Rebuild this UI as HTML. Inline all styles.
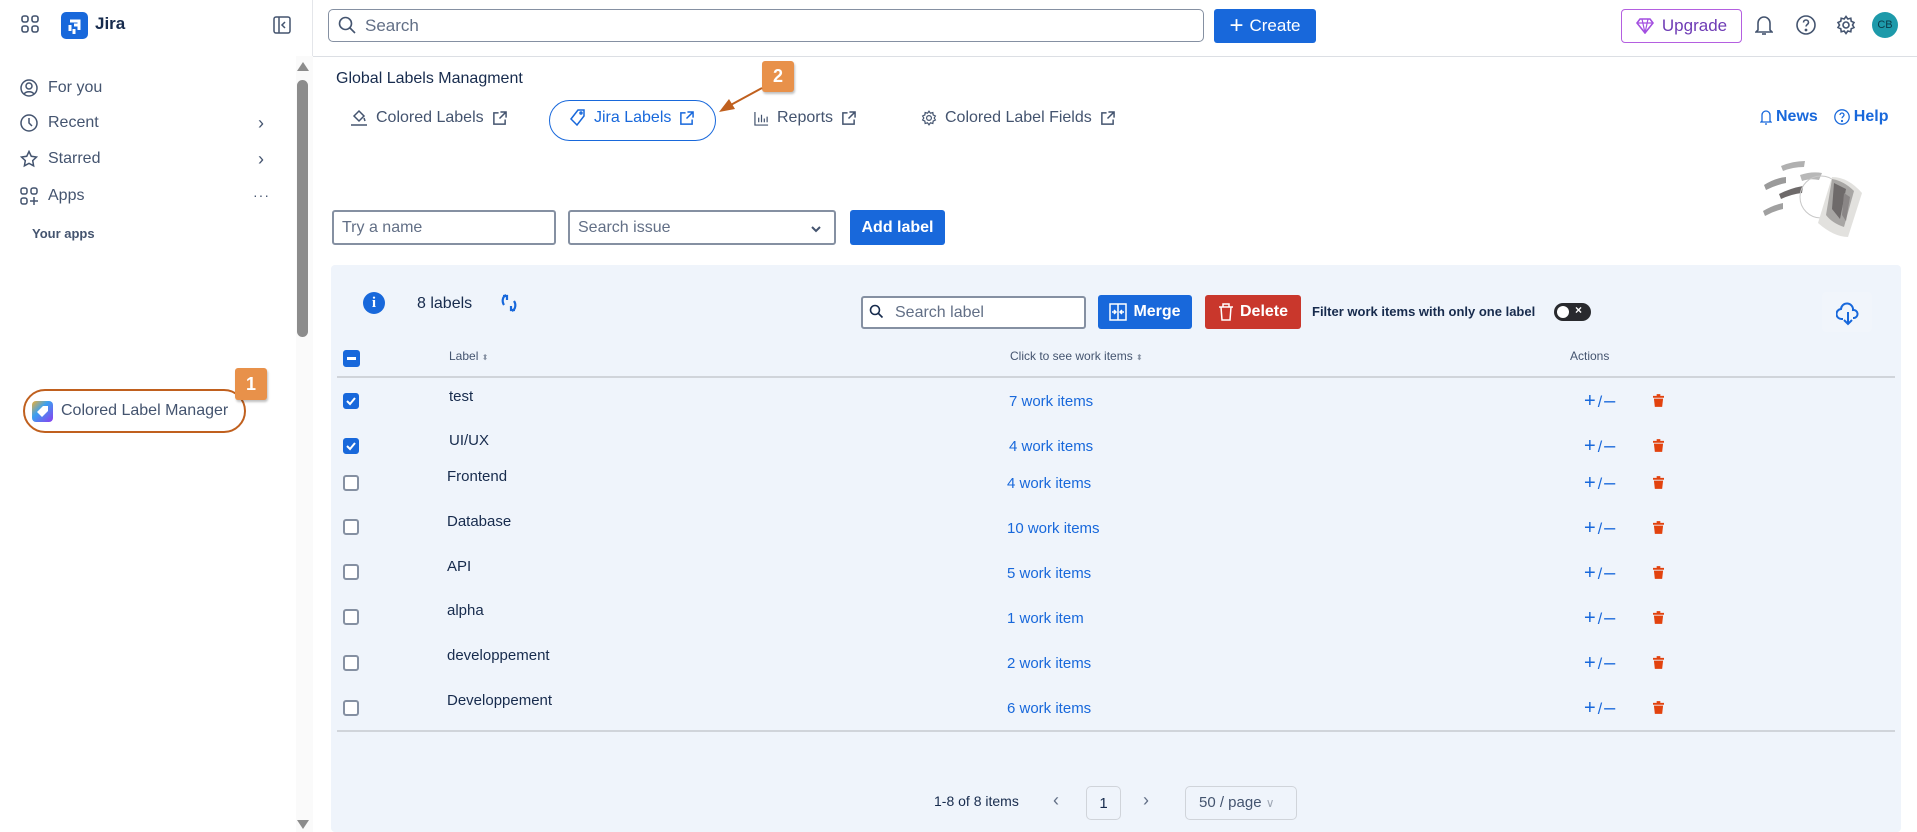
<!DOCTYPE html>
<html><head><meta charset="utf-8">
<style>
*{box-sizing:border-box;margin:0;padding:0}
body{width:1917px;height:832px;overflow:hidden;background:#fff;font-family:"Liberation Sans",sans-serif;color:#172b4d;position:relative}
.a{position:absolute}
.side{left:0;top:0;width:313px;height:832px;border-right:1px solid #e4e6ea}
.nav{left:20px;font-size:16px;color:#44546f;display:flex;align-items:center}
.nav svg{margin-right:10px}
.top{left:313px;top:56px;width:1604px;height:1px;background:#dcdfe4}
.btn{border-radius:3px;color:#fff;font-weight:bold;font-size:16px;display:flex;align-items:center;justify-content:center}
.inp{border:2px solid #8590a2;border-radius:3px;background:#fff;font-size:16px;color:#626f86;display:flex;align-items:center;padding-left:8px}
.tab{top:109px;font-size:16px;color:#44546f;display:flex;align-items:center;gap:8px}
.cb{width:16px;height:16px;border:2px solid #8590a2;border-radius:3px;background:#fff}
.cbon{background:#1868db;border-color:#1868db}
.lnk{color:#1868db;font-size:15px}
.lbl{font-size:15px}
.pm{color:#1868db;font-size:20px;line-height:24px;letter-spacing:2px}
.badge{background:#e8914a;color:#fff;font-weight:bold;font-size:18px;border-radius:3px;display:flex;align-items:center;justify-content:center;box-shadow:1px 2px 2px rgba(0,0,0,.25)}
</style></head><body>
<div class="a side"></div>
<svg class="a" style="left:21px;top:15px" width="18" height="18" viewBox="0 0 18 18" fill="none" stroke="#44546f" stroke-width="1.6"><rect x="1" y="1" width="6" height="6" rx="2"/><rect x="11" y="1" width="6" height="6" rx="2"/><rect x="1" y="11" width="6" height="6" rx="2"/><rect x="11" y="11" width="6" height="6" rx="2"/></svg>
<div class="a" style="left:61px;top:12px;width:27px;height:27px;background:#1868db;border-radius:5px"></div>
<svg class="a" style="left:61px;top:12px" width="27" height="27" viewBox="0 0 27 27"><path d="M9 9h9v9M13 13h5M9 13v6M13 17v5" stroke="#fff" stroke-width="3" fill="none"/></svg>
<div class="a" style="left:95px;top:14px;font-size:17px;font-weight:bold;color:#172b4d">Jira</div>
<svg class="a" style="left:273px;top:16px" width="18" height="18" viewBox="0 0 18 18" fill="none" stroke="#44546f" stroke-width="1.5"><rect x="1" y="1" width="16" height="16" rx="2"/><path d="M6 1v16M12 6l-3 3 3 3"/></svg>
<div class="a" style="left:296px;top:56px;width:17px;height:776px;background:#fafafa"></div>
<div class="a" style="left:297px;top:62px;width:0;height:0;border-left:6px solid transparent;border-right:6px solid transparent;border-bottom:9px solid #8c8c8c"></div>
<div class="a" style="left:297px;top:80px;width:11px;height:257px;background:#8c8c8c;border-radius:6px"></div>
<div class="a" style="left:297px;top:820px;width:0;height:0;border-left:6px solid transparent;border-right:6px solid transparent;border-top:9px solid #8c8c8c"></div>
<div class="a nav" style="top:79px"><svg width="18" height="18" viewBox="0 0 18 18" fill="none" stroke="#44546f" stroke-width="1.5"><circle cx="9" cy="9" r="8"/><circle cx="9" cy="7" r="3"/><path d="M4 15c2-3 8-3 10 0"/></svg>For you</div>
<div class="a nav" style="top:114px"><svg width="18" height="18" viewBox="0 0 18 18" fill="none" stroke="#44546f" stroke-width="1.5"><circle cx="9" cy="9" r="8"/><path d="M9 4v5l3 3"/></svg>Recent</div>
<div class="a nav" style="top:150px"><svg width="18" height="18" viewBox="0 0 18 18" fill="none" stroke="#44546f" stroke-width="1.5"><path d="M9 1.5l2.3 4.8 5.2.7-3.8 3.6.9 5.2L9 13.3l-4.6 2.5.9-5.2L1.5 7l5.2-.7z"/></svg>Starred</div>
<div class="a nav" style="top:187px"><svg width="18" height="18" viewBox="0 0 18 18" fill="none" stroke="#44546f" stroke-width="1.5"><rect x="1" y="1" width="6" height="6" rx="2"/><rect x="11" y="1" width="6" height="6" rx="2"/><rect x="1" y="11" width="6" height="6" rx="2"/><path d="M14 10v8M10 14h8"/></svg>Apps</div>
<div class="a" style="left:258px;top:113px;color:#44546f;font-size:18px">›</div>
<div class="a" style="left:258px;top:149px;color:#44546f;font-size:18px">›</div>
<div class="a" style="left:253px;top:187px;color:#44546f;font-size:14px;letter-spacing:1px">···</div>
<div class="a" style="left:32px;top:226px;font-size:13px;font-weight:bold;color:#44546f">Your apps</div>
<div class="a" style="left:23px;top:389px;width:223px;height:44px;border:2px solid #c0601e;border-radius:22px"></div>
<div class="a" style="left:32px;top:401px;width:21px;height:21px;border-radius:4px;background:linear-gradient(135deg,#f0b030,#3aa0f0 40%,#8b3ef0)"></div>
<svg class="a" style="left:35px;top:404px" width="15" height="15" viewBox="0 0 15 15"><path d="M8 2h5v5l-6 6-5-5z" fill="#fff"/></svg>
<div class="a" style="left:61px;top:402px;font-size:16px;color:#44546f">Colored Label Manager</div>
<div class="a badge" style="left:235px;top:368px;width:32px;height:32px">1</div>
<div class="a top"></div>
<div class="a inp" style="left:328px;top:9px;width:876px;height:33px;border:1.5px solid #8590a2;border-radius:5px;padding-left:36px;font-size:17px">Search</div>
<svg class="a" style="left:338px;top:16px" width="18" height="18" viewBox="0 0 18 18" fill="none" stroke="#44546f" stroke-width="1.6"><circle cx="7.5" cy="7.5" r="6"/><path d="M12 12l5 5"/></svg>
<div class="a btn" style="left:1214px;top:9px;width:102px;height:34px;background:#1868db;font-weight:normal;font-size:17px"><span style="font-size:24px;margin-right:6px;font-weight:300">+</span>Create</div>
<div class="a" style="left:1621px;top:9px;width:121px;height:34px;border:1.5px solid #b45fe0;border-radius:4px;color:#6e3bb5;font-size:17px;display:flex;align-items:center;justify-content:center;gap:8px"><svg width="18" height="16" viewBox="0 0 18 16"><path d="M4 1h10l3 4-8 10L1 5z" fill="none" stroke="#a34fe0" stroke-width="1.6"/><path d="M1 5h16M6 1l3 14 3-14" stroke="#a34fe0" stroke-width="1.2" fill="none"/></svg>Upgrade</div>
<svg class="a" style="left:1755px;top:14px" width="18" height="22" viewBox="0 0 18 22" fill="none" stroke="#44546f" stroke-width="1.6"><path d="M3 16V9a6 6 0 0112 0v7l2 2H1z"/><path d="M7 20h4"/></svg>
<svg class="a" style="left:1796px;top:15px" width="20" height="20" viewBox="0 0 20 20" fill="none" stroke="#44546f" stroke-width="1.6"><circle cx="10" cy="10" r="9"/><path d="M7.5 7.5a2.5 2.5 0 115 0c0 2-2.5 2-2.5 4"/><circle cx="10" cy="15" r=".6" fill="#44546f"/></svg>
<svg class="a" style="left:1836px;top:15px" width="20" height="20" viewBox="0 0 20 20" fill="none" stroke="#44546f" stroke-width="1.6"><circle cx="10" cy="10" r="3"/><path d="M10 1.5l1.8 2.5 3-.8.4 3 2.8 1.3-1.5 2.5 1.5 2.5-2.8 1.3-.4 3-3-.8L10 18.5l-1.8-2.5-3 .8-.4-3L2 12.5 3.5 10 2 7.5l2.8-1.3.4-3 3 .8z"/></svg>
<div class="a" style="left:1872px;top:12px;width:26px;height:26px;border-radius:50%;background:#1d9aaa;color:#0b3a48;font-size:11px;display:flex;align-items:center;justify-content:center">CB</div>
<div class="a" style="left:336px;top:70px;font-size:16px;color:#172b4d">Global Labels Managment</div>
<div class="a tab" style="left:350px"><svg width="18" height="18" viewBox="0 0 18 18" fill="none" stroke="#44546f" stroke-width="1.5"><path d="M4 7l5-5 5 5-5 5z"/><path d="M14 9l1 3"/><path d="M1 16h16"/></svg>Colored Labels<svg width="15" height="15" viewBox="0 0 16 16" fill="none" stroke="#44546f" stroke-width="1.6"><path d="M7 2H2v12h12V9M9 1h6v6M15 1L8 8"/></svg></div>
<div class="a" style="left:549px;top:100px;width:167px;height:41px;border:1.5px solid #1868db;border-radius:21px"></div>
<div class="a tab" style="left:570px;color:#1868db"><svg width="16" height="18" viewBox="0 0 16 18" fill="none" stroke="#1868db" stroke-width="1.5"><path d="M8 1h6v6l-7 9-6-6z"/><circle cx="11" cy="4" r="1"/></svg>Jira Labels<svg width="15" height="15" viewBox="0 0 16 16" fill="none" stroke="#1868db" stroke-width="1.6"><path d="M7 2H2v12h12V9M9 1h6v6M15 1L8 8"/></svg></div>
<div class="a tab" style="left:754px"><svg width="15" height="15" viewBox="0 0 16 16" fill="none" stroke="#44546f" stroke-width="1.3"><path d="M1 1v14h14M5 12V7M8 12V4M11 12V8M14 12V6"/></svg>Reports<svg width="15" height="15" viewBox="0 0 16 16" fill="none" stroke="#44546f" stroke-width="1.6"><path d="M7 2H2v12h12V9M9 1h6v6M15 1L8 8"/></svg></div>
<div class="a tab" style="left:921px"><svg width="16" height="16" viewBox="0 0 20 20" fill="none" stroke="#44546f" stroke-width="1.5"><circle cx="10" cy="10" r="3"/><path d="M10 1.5l1.8 2.5 3-.8.4 3 2.8 1.3-1.5 2.5 1.5 2.5-2.8 1.3-.4 3-3-.8L10 18.5l-1.8-2.5-3 .8-.4-3L2 12.5 3.5 10 2 7.5l2.8-1.3.4-3 3 .8z"/></svg>Colored Label Fields<svg width="15" height="15" viewBox="0 0 16 16" fill="none" stroke="#44546f" stroke-width="1.6"><path d="M7 2H2v12h12V9M9 1h6v6M15 1L8 8"/></svg></div>
<div class="a badge" style="left:762px;top:61px;width:32px;height:31px">2</div>
<svg class="a" style="left:715px;top:85px" width="50" height="30"><path d="M47 3L12 22" stroke="#c0601e" stroke-width="2"/><path d="M4 27l16-3-6-10z" fill="#c0601e"/></svg>
<div class="a" style="left:1760px;top:108px;font-size:16px;font-weight:bold;color:#1868db;display:flex;align-items:center;gap:4px"><svg width="12" height="16" viewBox="0 0 12 16" fill="none" stroke="#1868db" stroke-width="1.3"><path d="M2 12V6a4 4 0 018 0v6l1 1H1z"/><path d="M5 15h2"/></svg>News<span style="width:8px"></span><svg width="16" height="16" viewBox="0 0 20 20" fill="none" stroke="#1868db" stroke-width="1.6"><circle cx="10" cy="10" r="9"/><path d="M7.5 7.5a2.5 2.5 0 115 0c0 2-2.5 2-2.5 4"/><circle cx="10" cy="15" r=".6"/></svg>Help</div>
<!-- bucket -->
<svg class="a" style="left:1748px;top:153px" width="120" height="95" viewBox="0 0 120 95">
<path d="M33 13q12-5 24-5l-1 6q-11 0-21 4z" fill="#b0b0b0"/>
<path d="M16 32q11-7 22-8l0 6q-10 2-20 7z" fill="#9a9a9a"/>
<path d="M31 41q12-6 24-8l-1 7q-10 1-21 6z" fill="#6e6a6a"/>
<path d="M15 58q10-6 20-8l0 6q-9 2-18 7z" fill="#a0a0a0"/>
<path d="M52 22q12-4 22-2l-3 7q-9-2-17 1z" fill="#b8b8b8"/>
<circle cx="73" cy="44" r="21" fill="none" stroke="#c8c8c8" stroke-width="1"/>
<path d="M84 24q16 0 30 16l-14 44q-14 0-30-14z" fill="#e2e1de"/>
<path d="M84 26q12 2 22 12l-10 36q-12-4-18-12z" fill="#a8a6a4"/>
<path d="M86 30l12 6-6 30-8-10z" fill="#6e6a6a"/>
<path d="M96 40l6 4-4 24-4-6z" fill="#8a8686"/>
</svg>
<div class="a inp" style="left:332px;top:210px;width:224px;height:35px">Try a name</div>
<div class="a inp" style="left:568px;top:210px;width:268px;height:35px">Search issue<svg style="position:absolute;right:12px;top:13px" width="12" height="8" viewBox="0 0 12 8"><path d="M2 2l4 4 4-4" stroke="#44546f" stroke-width="2" fill="none"/></svg></div>
<div class="a btn" style="left:850px;top:210px;width:95px;height:35px;background:#1868db">Add label</div>
<div class="a" style="left:331px;top:265px;width:1570px;height:567px;background:#eff4fb;border-radius:4px"></div>
<div class="a" style="left:363px;top:292px;width:22px;height:22px;border-radius:50%;background:#1868db;color:#fff;font-weight:bold;font-size:15px;text-align:center;line-height:22px;font-family:'Liberation Serif',serif">i</div>
<div class="a" style="left:417px;top:295px;font-size:16px;color:#172b4d">8 labels</div>
<svg class="a" style="left:498px;top:292px" width="22" height="22" viewBox="0 0 22 22" fill="none" stroke="#1868db" stroke-width="2.2"><path d="M8 3C4 5 4 10 6 13M5 4h4v4"/><path d="M14 19c4-2 4-7 2-10M17 18h-4v-4"/></svg>
<div class="a inp" style="left:861px;top:296px;width:225px;height:33px;padding-left:32px;font-size:16px">Search label</div>
<svg class="a" style="left:869px;top:304px" width="15" height="15" viewBox="0 0 15 15" fill="none" stroke="#172b4d" stroke-width="1.6"><circle cx="6" cy="6" r="4.5"/><path d="M9.5 9.5l4 4"/></svg>
<div class="a btn" style="left:1098px;top:295px;width:94px;height:34px;background:#1868db;gap:6px"><svg width="18" height="18" viewBox="0 0 18 18" fill="none" stroke="#fff" stroke-width="1.5"><rect x="1" y="1" width="16" height="16"/><path d="M9 1v16M3 9h4M11 9h4M5 7l2 2-2 2M13 7l-2 2 2 2"/></svg>Merge</div>
<div class="a btn" style="left:1205px;top:295px;width:96px;height:34px;background:#c9372c;gap:6px"><svg width="16" height="18" viewBox="0 0 16 18" fill="none" stroke="#fff" stroke-width="1.5"><path d="M1 4h14M5 4V1h6v3M3 4l1 13h8l1-13"/></svg>Delete</div>
<div class="a" style="left:1312px;top:304px;font-size:13px;font-weight:bold;color:#172b4d">Filter work items with only one label</div>
<div class="a" style="left:1554px;top:303px;width:37px;height:18px;border-radius:9px;background:#292a2e"></div>
<div class="a" style="left:1557px;top:306px;width:12px;height:12px;border-radius:50%;background:#fff"></div>
<div class="a" style="left:1575px;top:303px;color:#fff;font-size:12px;font-weight:bold">×</div>
<div class="a" style="left:1822px;top:292px;width:50px;height:40px;border-radius:4px;background:#f1f5fb"></div>
<svg class="a" style="left:1836px;top:302px" width="24" height="24" viewBox="0 0 24 24" fill="none" stroke="#1868db" stroke-width="2"><path d="M7 17H6a5 5 0 01-1-10 6 6 0 0112 1 4 4 0 011 8h-1"/><path d="M12 10v12M8 18l4 4 4-4"/></svg>
<div class="a cb cbon" style="left:343px;top:350px;width:17px;height:17px"></div>
<div class="a" style="left:347px;top:357px;width:9px;height:3px;background:#fff"></div>
<div class="a" style="left:449px;top:349px;font-size:12px;color:#44546f">Label <span style="font-size:8px;color:#8590a2">⬍</span></div>
<div class="a" style="left:1010px;top:349px;font-size:12px;color:#44546f">Click to see work items <span style="font-size:8px;color:#8590a2">⬍</span></div>
<div class="a" style="left:1570px;top:349px;font-size:12px;color:#44546f">Actions</div>
<div class="a" style="left:337px;top:376px;width:1558px;height:2px;background:#d0d4da"></div>
<div class="a" style="left:337px;top:730px;width:1558px;height:2px;background:#d0d4da"></div>

<div class="a cb cbon" style="left:343px;top:393px"></div><svg class="a" style="left:345px;top:395px" width="12" height="12"><path d="M2 6l3 3 5-6" stroke="#fff" stroke-width="2" fill="none"/></svg>
<div class="a lbl" style="left:449px;top:388px">test</div><div class="a lnk" style="left:1009px;top:393px">7 work items</div>
<div class="a cb cbon" style="left:343px;top:438px"></div><svg class="a" style="left:345px;top:440px" width="12" height="12"><path d="M2 6l3 3 5-6" stroke="#fff" stroke-width="2" fill="none"/></svg>
<div class="a lbl" style="left:449px;top:432px">UI/UX</div><div class="a lnk" style="left:1009px;top:438px">4 work items</div>
<div class="a cb" style="left:343px;top:475px"></div><div class="a lbl" style="left:447px;top:468px">Frontend</div><div class="a lnk" style="left:1007px;top:475px">4 work items</div>
<div class="a cb" style="left:343px;top:519px"></div><div class="a lbl" style="left:447px;top:513px">Database</div><div class="a lnk" style="left:1007px;top:520px">10 work items</div>
<div class="a cb" style="left:343px;top:564px"></div><div class="a lbl" style="left:447px;top:558px">API</div><div class="a lnk" style="left:1007px;top:565px">5 work items</div>
<div class="a cb" style="left:343px;top:609px"></div><div class="a lbl" style="left:447px;top:602px">alpha</div><div class="a lnk" style="left:1007px;top:610px">1 work item</div>
<div class="a cb" style="left:343px;top:655px"></div><div class="a lbl" style="left:447px;top:647px">developpement</div><div class="a lnk" style="left:1007px;top:655px">2 work items</div>
<div class="a cb" style="left:343px;top:700px"></div><div class="a lbl" style="left:447px;top:692px">Developpement</div><div class="a lnk" style="left:1007px;top:700px">6 work items</div>

<div class="a pm" style="left:1584px;top:389px">+<span style="font-size:16px">/</span>–</div>
<div class="a pm" style="left:1584px;top:434px">+<span style="font-size:16px">/</span>–</div>
<div class="a pm" style="left:1584px;top:471px">+<span style="font-size:16px">/</span>–</div>
<div class="a pm" style="left:1584px;top:516px">+<span style="font-size:16px">/</span>–</div>
<div class="a pm" style="left:1584px;top:561px">+<span style="font-size:16px">/</span>–</div>
<div class="a pm" style="left:1584px;top:606px">+<span style="font-size:16px">/</span>–</div>
<div class="a pm" style="left:1584px;top:651px">+<span style="font-size:16px">/</span>–</div>
<div class="a pm" style="left:1584px;top:696px">+<span style="font-size:16px">/</span>–</div>
<svg class="a" style="left:1653px;top:394px" width="11" height="13" viewBox="0 0 12 14" fill="#e2420e"><path d="M4 0h4v2h4v2H0V2h4zM1 5h10l-1 9H2z"/></svg>
<svg class="a" style="left:1653px;top:439px" width="11" height="13" viewBox="0 0 12 14" fill="#e2420e"><path d="M4 0h4v2h4v2H0V2h4zM1 5h10l-1 9H2z"/></svg>
<svg class="a" style="left:1653px;top:476px" width="11" height="13" viewBox="0 0 12 14" fill="#e2420e"><path d="M4 0h4v2h4v2H0V2h4zM1 5h10l-1 9H2z"/></svg>
<svg class="a" style="left:1653px;top:521px" width="11" height="13" viewBox="0 0 12 14" fill="#e2420e"><path d="M4 0h4v2h4v2H0V2h4zM1 5h10l-1 9H2z"/></svg>
<svg class="a" style="left:1653px;top:566px" width="11" height="13" viewBox="0 0 12 14" fill="#e2420e"><path d="M4 0h4v2h4v2H0V2h4zM1 5h10l-1 9H2z"/></svg>
<svg class="a" style="left:1653px;top:611px" width="11" height="13" viewBox="0 0 12 14" fill="#e2420e"><path d="M4 0h4v2h4v2H0V2h4zM1 5h10l-1 9H2z"/></svg>
<svg class="a" style="left:1653px;top:656px" width="11" height="13" viewBox="0 0 12 14" fill="#e2420e"><path d="M4 0h4v2h4v2H0V2h4zM1 5h10l-1 9H2z"/></svg>
<svg class="a" style="left:1653px;top:701px" width="11" height="13" viewBox="0 0 12 14" fill="#e2420e"><path d="M4 0h4v2h4v2H0V2h4zM1 5h10l-1 9H2z"/></svg>
<div class="a" style="left:934px;top:793px;font-size:14px;color:#172b4d">1-8 of 8 items</div>
<div class="a" style="left:1053px;top:790px;font-size:18px;color:#626f86">‹</div>
<div class="a" style="left:1086px;top:786px;width:35px;height:34px;border:1px solid #d0d4da;border-radius:5px;font-size:15px;display:flex;align-items:center;justify-content:center">1</div>
<div class="a" style="left:1143px;top:790px;font-size:18px;color:#626f86">›</div>
<div class="a" style="left:1185px;top:786px;width:112px;height:34px;border:1px solid #d0d4da;border-radius:5px;font-size:15px;color:#44546f;padding-left:13px;line-height:32px">50 / page <span style="color:#a0a8b5;font-size:12px">∨</span></div>
</body></html>
